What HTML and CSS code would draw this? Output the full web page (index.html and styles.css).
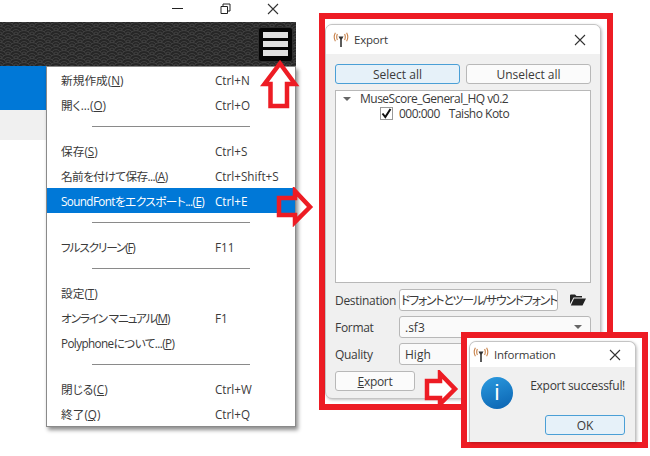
FILE: index.html
```html
<!DOCTYPE html>
<html lang="ja">

<head>
    <meta charset="UTF-8">
    <title>Polyphone SoundFont export</title>
    <link rel="stylesheet" href="styles.css">
</head>

<body>
    <svg class="defs" width="0" height="0">
        <defs>
            <symbol id="antenna" viewBox="0 0 16 16">
                <path d="M5.500 4.500 H10.500 L8.800 7.500 V15 H7.200 V7.500 Z" fill="#333"/>
                <path d="M4.400 2 Q3 5 4.400 8 M2.400 .8 Q0 5 2.400 9.200 M11.600 2 Q13 5 11.600 8 M13.600 .8 Q16 5 13.600 9.200" fill="none" stroke="#c8824a" stroke-width="1.100"/>
            </symbol>
            <symbol id="close" viewBox="0 0 12 12">
                <path d="M1 1 L11 11 M11 1 L1 11" stroke="#333" stroke-width="1.100" fill="none"/>
            </symbol>
        </defs>
    </svg>

    <!-- main window behind the menu -->
    <div class="app">
        <div class="win-controls">
            <svg width="11" height="11" viewBox="0 0 11 11"><path d="M0 5.500 H11" stroke="#222" stroke-width="1"/></svg>
            <svg width="11" height="11" viewBox="0 0 11 11"><path d="M1 3.500 H7.500 V10.500 H1 Z M3 3 V1 H10 V8 H8" stroke="#222" stroke-width="1" fill="none"/></svg>
            <svg width="12" height="12"><use href="#close"/></svg>
        </div>
        <div class="toolbar">
            <svg class="wave" width="296" height="44">
                <defs>
                    <g id="scale" fill="#262626" stroke="#404040" stroke-width="1">
                        <circle r="7.500"/>
                        <circle r="4.500"/>
                        <circle r="2"/>
                    </g>
                    <pattern id="seigaiha" width="16" height="8" patternUnits="userSpaceOnUse">
                        <use href="#scale" x="8" y="0"/>
                        <use href="#scale" x="0" y="4"/>
                        <use href="#scale" x="16" y="4"/>
                        <use href="#scale" x="8" y="8"/>
                        <use href="#scale" x="0" y="12"/>
                        <use href="#scale" x="16" y="12"/>
                    </pattern>
                </defs>
                <rect width="296" height="44" fill="url(#seigaiha)"/>
            </svg>
            <div class="burger">
                <span></span>
                <span></span>
                <span></span>
            </div>
        </div>
        <div class="tab-blue"></div>
        <div class="tab-grey"></div>
    </div>

    <div class="menu">
        <div class="menu-item"><span class="menu-label">新規作成(<u>N</u>)</span><span>Ctrl+N</span></div>
        <div class="menu-item"><span class="menu-label">開く...(<u>O</u>)</span><span>Ctrl+O</span></div>
        <div class="menu-sep"></div>
        <div class="menu-item"><span class="menu-label">保存(<u>S</u>)</span><span>Ctrl+S</span></div>
        <div class="menu-item"><span class="menu-label tight">名前を付けて保存...(<u>A</u>)</span><span>Ctrl+Shift+S</span></div>
        <div class="menu-item active"><span class="menu-label tight">SoundFontをエクスポート...(<u>E</u>)</span><span>Ctrl+E</span></div>
        <div class="menu-sep"></div>
        <div class="menu-item"><span class="menu-label tighter">フルスクリーン(<u>F</u>)</span><span>F11</span></div>
        <div class="menu-sep"></div>
        <div class="menu-item"><span class="menu-label">設定(<u>T</u>)</span></div>
        <div class="menu-item"><span class="menu-label tighter">オンライン マニュアル(<u>M</u>)</span><span>F1</span></div>
        <div class="menu-item"><span class="menu-label tight">Polyphoneについて...(<u>P</u>)</span></div>
        <div class="menu-sep"></div>
        <div class="menu-item"><span class="menu-label">閉じる(<u>C</u>)</span><span>Ctrl+W</span></div>
        <div class="menu-item"><span class="menu-label">終了(<u>Q</u>)</span><span>Ctrl+Q</span></div>
    </div>

    <!-- export dialog -->
    <div class="frame export-frame">
        <div class="dialog">
            <div class="titlebar">
                <svg class="app-icon" width="16" height="16"><use href="#antenna"/></svg>
                <span class="title">Export</span>
                <svg class="x" width="12" height="12"><use href="#close"/></svg>
            </div>
            <div class="export-body">
                <div class="btn-row">
                    <div class="btn focus">Select all</div>
                    <div class="btn">Unselect all</div>
                </div>
                <div class="tree">
                    <div class="tree-row">
                        <span class="caret"></span>
                        <span>MuseScore_General_HQ v0.2</span>
                    </div>
                    <div class="tree-row child">
                        <span class="check">
                            <svg width="11" height="11" viewBox="0 0 11 11"><path d="M1.500 5.500 L4.300 9 L9.500 1" fill="none" stroke="#111" stroke-width="2"/></svg>
                        </span>
                        <span class="preset-id">000:000</span>
                        <span>Taisho Koto</span>
                    </div>
                </div>
                <div class="field">
                    <label>Destination</label>
                    <div class="input path-input"><span>ドフォントとツール/サウンドフォント</span></div>
                    <svg class="folder" width="16" height="12" viewBox="0 0 16 12"><path d="M0 1.500 Q0 .5 1 .5 H5 L6.500 2 H12 V3.500 H3.500 L0 10 Z M4 4.500 H16 L12.500 11.500 H.8 Z" fill="#222"/></svg>
                </div>
                <div class="field">
                    <label>Format</label>
                    <div class="input combo">.sf3<span class="caret"></span></div>
                </div>
                <div class="field">
                    <label>Quality</label>
                    <div class="input combo">High<span class="caret"></span></div>
                </div>
                <div class="btn export-btn"><span><u>E</u>xport</span></div>
            </div>
        </div>
    </div>

    <!-- information popup -->
    <div class="frame info-frame">
        <div class="dialog">
            <div class="titlebar info-title">
                <svg class="app-icon" width="16" height="16"><use href="#antenna"/></svg>
                <span class="title">Information</span>
                <svg class="x" width="12" height="12"><use href="#close"/></svg>
            </div>
            <div class="info-body">
                <div class="info-main">
                    <div class="info-icon">i</div>
                    <div class="info-text">Export successful!</div>
                </div>
                <div class="btn focus ok-btn">OK</div>
            </div>
        </div>
    </div>

    <!-- red annotation arrows -->
    <svg class="arrow arrow-up" width="40" height="50" viewBox="0 0 40 50">
        <path d="M20 3.500 L35 24 H27 V46 H10.500 V24 H4.500 Z" fill="none" stroke="#ed1c24" stroke-width="4.500"/>
    </svg>
    <svg class="arrow arrow-menu" width="40" height="40" viewBox="0 0 40 40">
        <path d="M20 4 L35 20 L20 35 V28 H4 V11 H20 Z" fill="none" stroke="#ed1c24" stroke-width="4.500"/>
    </svg>
    <svg class="arrow arrow-info" width="36" height="38" viewBox="0 0 36 38">
        <path d="M16 3.500 L31 19 L16 34 V28 H3 V11 H16 Z" fill="#fff" stroke="#ed1c24" stroke-width="4.500"/>
    </svg>
</body>

</html>
```

FILE: styles.css
```css
* {
    margin: 0;
    padding: 0;
    box-sizing: border-box;
}

body {
    position: relative;
    width: 650px;
    height: 456px;
    overflow: hidden;
    background-color: #FFFFFF;
    color: #3a3a3a;
    font-family: "Open Sans", "Noto Sans CJK JP", sans-serif;
    font-size: 12px;
    font-feature-settings: "palt";
}

.defs {
    position: absolute;
}

/* main window */
.app {
    position: absolute;
    left: 0;
    top: 0;
    width: 296px;
}

.win-controls {
    display: flex;
    justify-content: flex-end;
    gap: 36px;
    height: 22px;
    padding: 3px 18px 0 0;
    align-items: flex-start;
    margin-right: -1px;
}

.win-controls svg:first-child {
    margin-right: 1px;
}

.toolbar {
    position: relative;
    height: 44px;
    display: flex;
    justify-content: flex-end;
    align-items: center;
    padding-right: 3px;
}

.wave {
    position: absolute;
    left: 0;
    top: 0;
}

.burger {
    position: relative;
    width: 35px;
    height: 35px;
    background-color: #050505;
    border: 1px solid #2e2e2e;
    border-radius: 3px;
    display: flex;
    flex-direction: column;
    justify-content: center;
    gap: 3px;
    padding: 0 4px;
}

.burger span {
    height: 6px;
    background-color: #e0e0e0;
}

.tab-blue {
    height: 44px;
    background-color: #0078d7;
}

.tab-grey {
    height: 30px;
    background-color: #f0f0f0;
}

/* dropdown menu */
.menu {
    position: absolute;
    left: 46px;
    top: 66px;
    width: 250px;
    height: 361px;
    background-color: #FFFFFF;
    border: 1px solid #8a8a8a;
    box-shadow: 2px 3px 4px rgba(0, 0, 0, 0.45);
    font-size: 11.7px;
}

.menu-item {
    display: flex;
    align-items: center;
    height: 25px;
    padding-left: 14px;
}

.menu-label {
    width: 154px;
    white-space: nowrap;
}

.menu-label.tight {
    letter-spacing: -0.6px;
}

.menu-label.tighter {
    letter-spacing: -1.2px;
}

.menu-item.active {
    background-color: #0078d7;
    color: #FFFFFF;
}

.menu-sep {
    height: 1px;
    margin: 9px 45px 11px 45px;
    background-color: #8a8a8a;
}

/* red annotated frames */
.frame {
    position: absolute;
    border: 6px solid #ed1c24;
    background-color: #FFFFFF;
}

.export-frame {
    left: 319px;
    top: 13px;
    width: 294px;
    height: 397px;
    padding: 5px 6px 5px 0;
}

.info-frame {
    left: 461px;
    top: 332px;
    width: 187px;
    height: 116px;
    padding: 3px 6px 0 2px;
}

.dialog {
    height: 100%;
    display: flex;
    flex-direction: column;
    background-color: #f0f0f0;
    border: 1px solid #c4c4c4;
    border-radius: 7px;
    overflow: hidden;
    box-shadow: 1px 1px 3px rgba(0, 0, 0, 0.25);
}

.info-frame .dialog {
    border-bottom: none;
    border-radius: 7px 7px 0 0;
}

.titlebar {
    display: flex;
    align-items: center;
    height: 29px;
    padding: 0 14px 0 7px;
    background-color: #FFFFFF;
}

.info-title {
    height: 25px;
    padding-left: 3px;
}

.title {
    flex: 1;
    margin-left: 5px;
    font-size: 11.5px;
    letter-spacing: -0.2px;
}

.export-body {
    display: flex;
    flex-direction: column;
    padding: 10px 9px 0 9px;
}

.btn-row {
    display: grid;
    grid-template-columns: 125px 125px;
    gap: 6px;
    margin-bottom: 6px;
}

.btn {
    height: 20px;
    display: flex;
    justify-content: center;
    align-items: center;
    background-color: #fbfbfb;
    border: 1px solid #b8b8b8;
    border-radius: 3px;
}

.btn.focus {
    background-color: #e6f1f9;
    border-color: #4a9fd6;
}

.tree {
    height: 193px;
    background-color: #FFFFFF;
    border: 1px solid #b8b8b8;
    margin-bottom: 6px;
    letter-spacing: -0.5px;
    line-height: 15px;
}

.tree-row {
    display: flex;
    align-items: center;
    height: 15px;
    padding-left: 7px;
    white-space: nowrap;
}

.tree-row.child {
    padding-left: 44px;
}

.preset-id {
    margin-right: 9px;
}

.caret {
    width: 0;
    height: 0;
    border-left: 4px solid transparent;
    border-right: 4px solid transparent;
    border-top: 4px solid #666;
    margin-right: 9px;
}

.check {
    width: 13px;
    height: 13px;
    display: flex;
    align-items: center;
    justify-content: center;
    background-color: #FFFFFF;
    border: 1px solid #999;
    margin-right: 6px;
}

.field {
    display: flex;
    align-items: center;
    height: 22px;
    margin-bottom: 5px;
}

.field label {
    width: 64px;
    flex: none;
    letter-spacing: -0.3px;
}

.input {
    height: 22px;
    display: flex;
    align-items: center;
    background-color: #FFFFFF;
    border: 1px solid #b8b8b8;
    border-radius: 3px;
    padding: 0 5px;
    overflow: hidden;
    white-space: nowrap;
}

.path-input {
    width: 159px;
    flex: none;
    padding: 0 1px;
    letter-spacing: -1.3px;
}

.folder {
    margin-left: 12px;
}

.combo {
    flex: 1;
    justify-content: space-between;
    background-color: #FAFAFA;
}

.combo .caret {
    margin-right: 3px;
}

.export-btn {
    width: 80px;
    margin-top: 1px;
    letter-spacing: -0.3px;
}

.info-body {
    flex: 1;
    display: flex;
    flex-direction: column;
    align-items: flex-end;
    padding: 10px 10px 0 10px;
}

.info-main {
    width: 100%;
    display: flex;
    align-items: flex-start;
    justify-content: space-between;
}

.info-icon {
    width: 32px;
    height: 32px;
    display: flex;
    align-items: center;
    justify-content: center;
    margin-left: 1px;
    border-radius: 50%;
    background: linear-gradient(160deg, #2b9be0, #0a62b0);
    color: #FFFFFF;
    font-family: "Liberation Sans", sans-serif;
    font-size: 22px;
}

.info-text {
    white-space: nowrap;
    letter-spacing: -0.3px;
}

.ok-btn {
    width: 80px;
    margin-top: 6px;
}

/* arrows sit over everything */
.arrow {
    position: absolute;
}

.arrow-up {
    left: 260px;
    top: 60px;
}

.arrow-menu {
    left: 275px;
    top: 187px;
}

.arrow-info {
    left: 424px;
    top: 370px;
}
```
